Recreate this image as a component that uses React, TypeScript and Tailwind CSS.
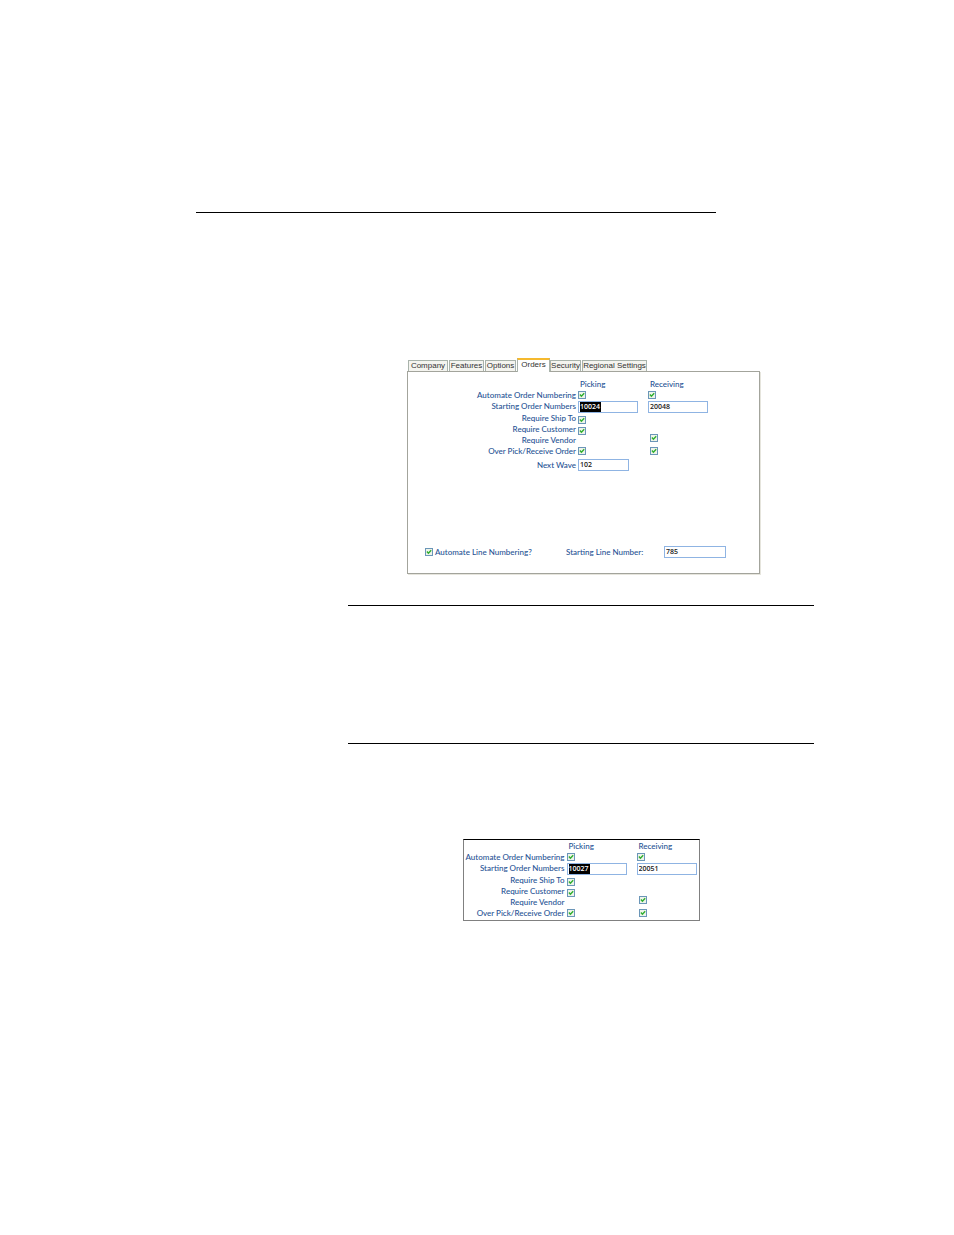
import { useState } from "react";
import type { ReactNode } from "react";

function Check({ label, id, className = "" }: { label: string; id?: string; className?: string }) {
  return (
    <span className={`grid size-2 shrink-0 ${className}`}>
      <input
        type="checkbox"
        id={id}
        aria-label={label}
        defaultChecked
        className="peer col-start-1 row-start-1 size-2 appearance-none border border-[#6b96b8] bg-[#eef4ea]"
      />
      <svg
        viewBox="0 0 8 8"
        className="pointer-events-none invisible col-start-1 row-start-1 size-2 peer-checked:visible"
        aria-hidden="true"
      >
        <path d="M1.9 3.6 L3.4 5.2 L6.2 2.3" fill="none" stroke="#2fae2f" strokeWidth="1.4" />
      </svg>
    </span>
  );
}

function Field({
  label,
  id,
  value,
  selected = false,
  className,
}: {
  label: string;
  id?: string;
  value: string;
  selected?: boolean;
  className: string;
}) {
  return (
    <span
      className={`flex h-3 items-center border border-[#8fb4e3] bg-white pl-px font-['Open_Sans','Noto_Sans',sans-serif] text-[7px] leading-[10px] font-semibold ${className}`}
    >
      <input
        type="text"
        id={id}
        aria-label={label}
        defaultValue={value}
        className={
          selected
            ? "h-[10px] w-[21px] bg-black text-white outline-none"
            : "h-[10px] w-full min-w-0 bg-transparent text-[#1a1a1a] outline-none"
        }
      />
    </span>
  );
}

const numberingLabels = ["Automate Order Numbering", "Starting Order Numbers"];
const ruleLabels = ["Require Ship To", "Require Customer", "Require Vendor", "Over Pick/Receive Order"];

function OrderSettings({
  name,
  picking,
  receiving,
  nextWave,
}: {
  name: string;
  picking: string;
  receiving: string;
  nextWave?: string;
}) {
  return (
    <div className="flex items-start">
      <div className="flex w-[99px] flex-col gap-px pt-[11px] text-right whitespace-nowrap">
        <div>
          {numberingLabels.map((text) => (
            <div key={text} className="h-[11px]">
              {text}
            </div>
          ))}
        </div>
        <div>
          {ruleLabels.map((text) => (
            <div key={text} className="h-[11px]">
              {text}
            </div>
          ))}
        </div>
        {nextWave && (
          <label htmlFor={`${name}-wave`} className="mt-[2px] h-3">
            Next Wave
          </label>
        )}
      </div>
      <div className="ml-[2px] flex w-[70px] flex-col items-start">
        <span className="h-[11px] pl-[2px]">Picking</span>
        <Check label="Automate picking order numbering" className="mt-px" />
        <Field label="Starting picking order number" value={picking} selected className="mt-[2px] w-[60px]" />
        <Check label="Picking requires ship to" className="mt-[3px]" />
        <Check label="Picking requires customer" className="mt-[3px]" />
        <Check label="Over pick order" className="mt-3" />
        {nextWave && (
          <Field id={`${name}-wave`} label="Next Wave" value={nextWave} className="mt-1 w-[51px]" />
        )}
      </div>
      <div className="flex flex-col items-start">
        <span className="h-[11px] pl-[2px]">Receiving</span>
        <Check label="Automate receiving order numbering" className="mt-px" />
        <Field label="Starting receiving order number" value={receiving} className="mt-[2px] w-[60px]" />
        <Check label="Receiving requires vendor" className="mt-[21px] ml-[2px]" />
        <Check label="Over receive order" className="mt-[5px] ml-[2px]" />
      </div>
    </div>
  );
}

const tabs = [
  { name: "Company", width: "w-10" },
  { name: "Features", width: "w-[35px]" },
  { name: "Options", width: "w-[31px]" },
  { name: "Orders", width: "w-[33px]" },
  { name: "Security", width: "w-[31px]" },
  { name: "Regional Settings", width: "w-[65px]" },
];

function TabBar({ children }: { children: ReactNode }) {
  const [active, setActive] = useState("Orders");
  return (
    <div className="w-[353px] max-w-full">
      <div
        role="tablist"
        className="flex h-[13px] items-end pl-px font-['Liberation_Sans',sans-serif] text-[8px] leading-[10px] text-[#333]"
      >
        {tabs.map(({ name, width }) => (
          <button
            key={name}
            type="button"
            role="tab"
            aria-selected={name === active}
            onClick={() => setActive(name)}
            className={`flex justify-center whitespace-nowrap ${width} ${
              name === active
                ? "-mb-px h-[14px] border-x border-t-2 border-x-[#a9b3ab] border-t-[#f5b92e] bg-white"
                : "mr-px h-[11px] border border-b-0 border-[#a9b3ab] bg-[#f4f4ef]"
            }`}
          >
            {name}
          </button>
        ))}
      </div>
      <div className="border border-[#a3a49c] shadow-[1px_1px_0_#e6e5dd]">{children}</div>
    </div>
  );
}

export default function App() {
  return (
    <main className="min-h-screen bg-white font-['Lato','Open_Sans',sans-serif] text-[8px] leading-[10px] font-medium text-[#265294]">
      <div className="pt-[212px] pr-[238px] pl-[196px]">
        <hr className="border-black" />
      </div>
      <div className="pr-[140px] pl-[348px]">
        <section aria-label="Order settings" className="mt-[145px] pl-[59px]">
          <TabBar>
            <div className="pt-[7px] pl-[69px]">
              <OrderSettings name="orders" picking="10024" receiving="20048" nextWave="102" />
            </div>
            <div className="flex items-center pt-[74px] pb-[15px] pl-[17px]">
              <Check id="line-numbering" label="Automate Line Numbering?" />
              <label htmlFor="line-numbering" className="ml-[2px] w-[131px]">
                Automate Line Numbering?
              </label>
              <label htmlFor="line-start" className="w-[98px]">
                Starting Line Number:
              </label>
              <Field id="line-start" label="Starting Line Number" value="785" className="w-[62px]" />
            </div>
          </TabBar>
        </section>
        <hr className="mt-[31px] border-black" />
        <hr className="mt-[137px] border-black" />
        <section
          aria-label="Updated order numbers"
          className="mx-auto mt-[95px] w-[237px] border border-[#808080] border-t-black pt-px pb-px pl-[2px]"
        >
          <OrderSettings name="updated" picking="10027" receiving="20051" />
        </section>
      </div>
    </main>
  );
}
